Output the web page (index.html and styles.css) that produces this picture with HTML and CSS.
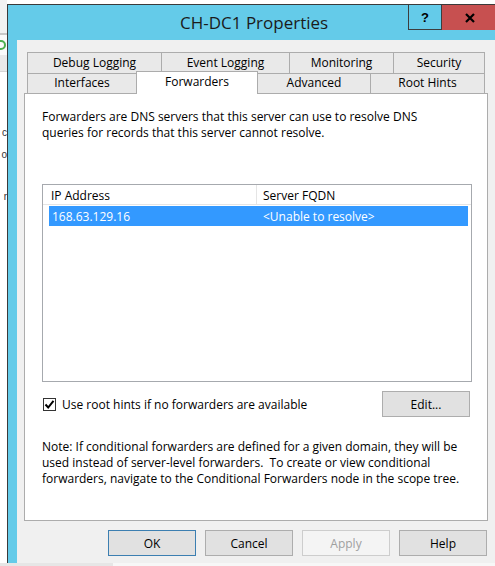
FILE: index.html
```html
<!DOCTYPE html>
<html>
<head>
<meta charset="utf-8">
<title>CH-DC1 Properties</title>
<link rel="stylesheet" href="styles.css">
</head>
<body>
<div class="screen">
  <div class="bg-strip">
    <div class="bg-top"></div>
    <div class="bg-icon-row"><span class="bg-icon"></span></div>
    <div class="bg-band"></div>
    <div class="bg-text">
      <span class="frag f1">c</span>
      <span class="frag f2">o</span>
      <span class="frag f3">r</span>
    </div>
  </div>
  <div class="window">
    <div class="titlebar">
      <div class="title">CH-DC1 Properties</div>
      <div class="caption">
        <div class="cap cap-help">?</div>
        <div class="cap cap-close">
          <svg width="10" height="10" viewBox="0 0 10 10"><path d="M1 1 L9 9 M9 1 L1 9" stroke="#000" stroke-width="2.2" fill="none"/></svg>
        </div>
      </div>
    </div>
    <div class="client">
      <div class="tabstrip">
        <div class="tab-row row-back">
          <div class="tab w-debug">Debug Logging</div>
          <div class="tab w-event">Event Logging</div>
          <div class="tab w-mon">Monitoring</div>
          <div class="tab w-sec">Security</div>
        </div>
        <div class="tab-row row-front">
          <div class="tab w-int">Interfaces</div>
          <div class="tab tab-active w-fwd">Forwarders</div>
          <div class="tab w-adv">Advanced</div>
          <div class="tab w-root">Root Hints</div>
        </div>
      </div>
      <div class="panel">
        <p class="intro">Forwarders are DNS servers that this server can use to resolve DNS<br>queries for records that this server cannot resolve.</p>
        <div class="listbox">
          <div class="lv-header">
            <div class="lv-h1">IP Address</div>
            <div class="lv-h2">Server FQDN</div>
          </div>
          <div class="lv-row selected">
            <div class="lv-c1">168.63.129.16</div>
            <div class="lv-c2">&lt;Unable to resolve&gt;</div>
          </div>
        </div>
        <div class="check-row">
          <label class="check">
            <span class="box"><svg width="11" height="11" viewBox="0 0 11 11"><path d="M1.5 5.5 L4.2 8.5 L9.5 1.8" stroke="#000" stroke-width="2" fill="none"/></svg></span>
            <span class="check-label">Use root hints if no forwarders are available</span>
          </label>
          <div class="btn btn-edit">Edit...</div>
        </div>
        <p class="note">Note: If conditional forwarders are defined for a given domain, they will be<br>used instead of server-level forwarders.&nbsp; To create or view conditional<br>forwarders, navigate to the Conditional Forwarders node in the scope tree.</p>
      </div>
      <div class="buttons">
        <div class="btn btn-default">OK</div>
        <div class="btn">Cancel</div>
        <div class="btn btn-disabled">Apply</div>
        <div class="btn">Help</div>
      </div>
    </div>
  </div>
</div>
<div class="bottom-strip">
  <div class="bs-left"></div>
  <div class="bs-right"></div>
</div>
</body>
</html>
```
FILE: styles.css
```css
html, body {
  margin: 0;
  padding: 0;
}
body {
  width: 495px;
  height: 566px;
  overflow: hidden;
  background: #ffffff;
  font-family: "Open Sans", "Liberation Sans", sans-serif;
  font-size: 12px;
  color: #000;
}
.screen {
  display: flex;
  height: 563px;
}

/* background app strip on the left */
.bg-strip {
  width: 7px;
  flex: none;
  display: flex;
  flex-direction: column;
  overflow: hidden;
  background: #fff;
}
.bg-top {
  height: 33px;
  background: #f2f2f2;
  border-bottom: 2px solid #c8c8c8;
}
.bg-icon-row {
  height: 20px;
  background: #fafafa;
  display: flex;
  align-items: center;
  overflow: hidden;
}
.bg-icon {
  width: 10px;
  height: 10px;
  margin-left: -4px;
  border: 2px solid #4caf50;
  border-radius: 50%;
  box-sizing: border-box;
}
.bg-band {
  height: 16px;
  background: #e9e9e9;
  border-bottom: 1px solid #d6d6d6;
}
.bg-text {
  flex: 1;
  display: flex;
  flex-direction: column;
  align-items: flex-end;
  font-family: "Liberation Sans", sans-serif;
  font-size: 10px;
  color: #333;
}
.frag {
  display: block;
  white-space: nowrap;
  line-height: 12px;
}
.f1 { margin-top: 55px; }
.f2 { margin-top: 10px; }
.f3 { margin-top: 30px; }

/* window */
.window {
  width: 498px;
  height: 559px;
  flex: none;
  margin-top: 4px;
  box-sizing: border-box;
  border-top: 1px solid #3a3a3a;
  border-left: 1px solid #3a3a3a;
  background: #64cbe9;
  display: flex;
  flex-direction: column;
}
.titlebar {
  height: 35px;
  flex: none;
  display: flex;
  align-items: flex-start;
}
.title {
  align-self: center;
  padding-left: 172px;
  font-size: 17px;
  color: #1b1b1b;
  white-space: nowrap;
}
.caption {
  margin-left: auto;
  display: flex;
}
.cap {
  height: 25px;
  box-sizing: border-box;
  display: flex;
  align-items: center;
  justify-content: center;
}
.cap-help {
  width: 34px;
  border: 1px solid #3d3d3d;
  border-top: none;
  font-family: "Liberation Sans", sans-serif;
  font-weight: bold;
  font-size: 13px;
  color: #000;
}
.cap-close {
  width: 63px;
  background: #c75050;
  padding-right: 8px;
}

/* client area */
.client {
  flex: 1;
  margin-left: 9px;
  background: #f0f0f0;
  padding: 12px 7px 0 7px;
}
.tabstrip {
  margin-left: 3px;
}
.tab-row {
  display: flex;
}
.tab {
  flex: none;
  box-sizing: border-box;
  border: 1px solid #acacac;
  border-bottom: none;
  background: #e9e9e9;
  text-align: center;
  white-space: nowrap;
  color: #000;
}
.tab + .tab {
  margin-left: -1px;
}
.row-back .tab {
  height: 21px;
  line-height: 19px;
}
.row-front .tab {
  height: 20px;
  line-height: 18px;
}
.row-front .tab-active {
  position: relative;
  z-index: 1;
  background: #fff;
  height: 23px;
  margin-top: -2px;
  margin-bottom: -1px;
  line-height: 19px;
}
.w-debug { width: 135px; }
.w-event { width: 129px; }
.w-mon { width: 105px; }
.w-sec { width: 92px; }
.w-int { width: 110px; }
.w-fwd { width: 122px; }
.w-adv { width: 114px; }
.w-root { width: 115px; }

.panel {
  width: 464px;
  height: 428px;
  box-sizing: border-box;
  border: 1px solid #acacac;
  background: #fff;
  padding: 15px 15px 0 17px;
}
.intro {
  margin: 0;
  line-height: 16px;
  white-space: nowrap;
}
.listbox {
  margin-top: 43px;
  width: 430px;
  height: 198px;
  box-sizing: border-box;
  border: 1px solid #a6a9ae;
}
.lv-header {
  display: flex;
  height: 20px;
  box-sizing: border-box;
  border-bottom: 1px solid #e5e5e5;
}
.lv-h1 {
  width: 214px;
  box-sizing: border-box;
  padding: 2px 0 0 8px;
  border-right: 1px solid #e5e5e5;
}
.lv-h2 {
  flex: 1;
  padding: 2px 0 0 6px;
}
.lv-row {
  display: flex;
  height: 20px;
  margin: 1px 3px 0 6px;
  align-items: center;
}
.lv-row.selected {
  background: #3399ff;
  color: #fff;
}
.lv-c1 {
  width: 207px;
  padding-left: 3px;
  box-sizing: border-box;
}
.lv-c2 {
  flex: 1;
  padding-left: 7px;
}

.check-row {
  margin-top: 9px;
  width: 428px;
  display: flex;
  align-items: center;
  justify-content: space-between;
}
.check {
  display: flex;
  align-items: center;
  margin-left: 1px;
}
.box {
  width: 13px;
  height: 13px;
  box-sizing: border-box;
  border: 1px solid #333;
  background: #fff;
  display: flex;
  align-items: center;
  justify-content: center;
}
.check-label {
  margin-left: 6px;
}
.btn {
  width: 88px;
  height: 26px;
  box-sizing: border-box;
  border: 1px solid #adadad;
  background: #e1e1e1;
  display: flex;
  align-items: center;
  justify-content: center;
  color: #000;
}
.note {
  margin: 22px 0 0 0;
  line-height: 16px;
  white-space: nowrap;
}
.buttons {
  width: 463px;
  margin-top: 9px;
  display: flex;
  justify-content: flex-end;
  gap: 9px;
}
.btn-default {
  border-color: #3c7fb1;
}
.btn-disabled {
  background: #f4f4f4;
  border-color: #cdcdcd;
  color: #a0a0a0;
}

.bottom-strip {
  display: flex;
  height: 3px;
}
.bs-left {
  width: 113px;
  background: #e6e6e6;
}
.bs-right {
  flex: 1;
  background: #f7f7f7;
}
```
